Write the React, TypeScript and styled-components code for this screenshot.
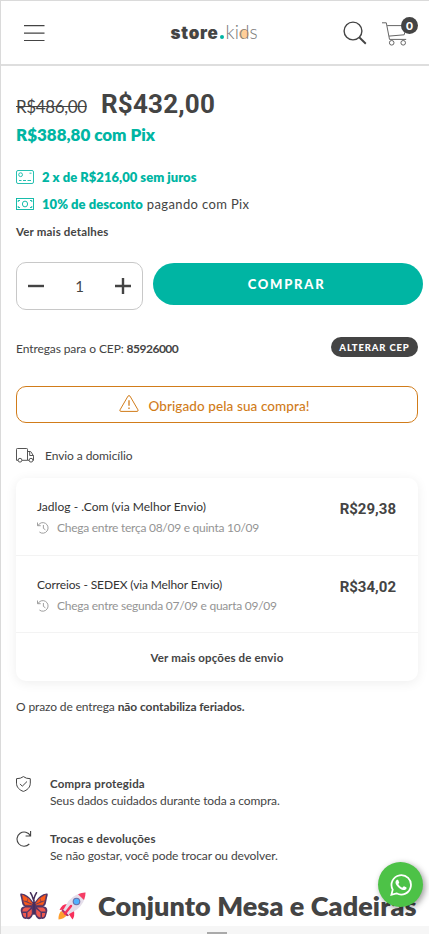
import React from "react";
import styled, { createGlobalStyle } from "styled-components";

const TEAL = "#00b5a3";
const INK = "#444444";
const ORANGE = "#d17c1a";

const GlobalStyle = createGlobalStyle`
  * { box-sizing: border-box; }
  body { margin: 0; background: #fff; color: ${INK}; font-family: Lato, "Liberation Sans", sans-serif; font-size: 12px; }
  svg { display: block; flex: none; }
`;

const Page = styled.div`
  position: relative;
  width: 429px;
  height: 934px;
  overflow: hidden;
  display: flex;
  flex-direction: column;
  border-left: 1px solid #dadada;
  border-top: 1px solid #dadada;
`;

const Header = styled.header`
  height: 65px;
  flex: none;
  display: grid;
  grid-template-columns: 1fr auto 1fr;
  align-items: center;
  padding: 0 10px 0 23px;
  border-bottom: 2px solid #dedede;
`;

const Logo = styled.div`
  display: flex;
  align-items: baseline;
  isolation: isolate;
  font-family: Inter, sans-serif;
  font-size: 18px;
  line-height: 22px;
  margin: 0 15px 0 0;
`;
const LogoBold = styled.span`
  font-weight: 900;
  font-size: 17px;
  letter-spacing: 0.7px;
`;
const LogoDot = styled.i`
  width: 4px;
  height: 4px;
  margin: 0 2px 0 1px;
  border-radius: 50%;
  background: ${TEAL};
`;
const LogoLight = styled.span`
  font-family: Lato, sans-serif;
  font-weight: 300;
  font-size: 19px;
  letter-spacing: 0;
  color: #777;
`;
const Disc = styled.span<{ $size: number; $left: number; $bottom: number }>`
  position: relative;
  &::before {
    content: "";
    position: absolute;
    z-index: -1;
    left: ${(p) => p.$left}px;
    bottom: ${(p) => p.$bottom}px;
    width: ${(p) => p.$size}px;
    height: ${(p) => p.$size}px;
    border-radius: 50%;
    background: #ffcf99;
  }
`;

const HeaderActions = styled.div`
  display: flex;
  justify-content: flex-end;
  align-items: center;
  gap: 15px;
`;
const Cart = styled.div`
  position: relative;
  width: 37px;
  height: 32px;
  padding-top: 5px;
`;
const CartCount = styled.span`
  position: absolute;
  left: 19px;
  top: 0;
  width: 17px;
  height: 17px;
  border-radius: 50%;
  background: ${INK};
  color: #fff;
  font: 900 12px/17px Lato, sans-serif;
  text-align: center;
`;

const Main = styled.main`
  display: flex;
  flex-direction: column;
  padding: 21px 11px 0 15px;
`;

const Prices = styled.div`
  display: flex;
  align-items: baseline;
  gap: 14px;
  height: 34px;
  line-height: 34px;
`;
const OldPrice = styled.s`
  font-size: 17px;
  letter-spacing: -0.38px;
  width: 71px;
`;
const Price = styled.strong`
  font-family: Roboto, sans-serif;
  font-size: 26px;
  font-weight: 700;
  letter-spacing: 0.18px;
`;
const PixPrice = styled.strong`
  height: 27px;
  line-height: 27px;
  font-size: 17px;
  font-weight: 800;
  letter-spacing: -0.02px;
  color: ${TEAL};
`;

const Benefits = styled.div`
  display: flex;
  flex-direction: column;
  margin-top: 15px;
`;
const Benefit = styled.div`
  height: 27px;
  display: flex;
  align-items: center;
  font-size: 13px;
  letter-spacing: 0.37px;
  svg { margin: 1px 8px 0 0; color: ${TEAL}; }
`;
const Strong = styled.b<{ $space?: number }>`
  letter-spacing: ${(p) => p.$space ?? 0.18}px;
`;
const TealStrong = styled(Strong)`
  color: ${TEAL};
  font-weight: 800;
  margin-right: 4px;
`;
const DetailsLink = styled.b`
  height: 29px;
  line-height: 30px;
  font-size: 11.5px;
  letter-spacing: 0.17px;
`;

const BuyRow = styled.div`
  display: flex;
  align-items: flex-start;
  gap: 10px;
  margin: 16px -6px 0 0;
  height: 48px;
`;
const Quantity = styled.div`
  width: 127px;
  height: 48px;
  display: flex;
  align-items: center;
  justify-content: space-between;
  padding: 0 11px;
  border: 1px solid #c8c8c8;
  border-radius: 10px;
  font-size: 15px;
`;
const BuyButton = styled.button`
  width: 270px;
  height: 42px;
  margin-top: 1px;
  padding: 0 3px 1px 0;
  border: 0;
  border-radius: 21px;
  background: ${TEAL};
  color: #fff;
  font: 900 13px Lato, sans-serif;
  letter-spacing: 1.75px;
`;

const CepRow = styled.div`
  display: flex;
  align-items: center;
  justify-content: space-between;
  height: 22px;
  margin-top: 26px;
`;
const CepText = styled.span`
  letter-spacing: -0.1px;
  padding-top: 3px;
`;
const CepButton = styled.button`
  width: 87px;
  height: 20px;
  padding: 0;
  border: 0;
  border-radius: 10px;
  background: ${INK};
  color: #fff;
  font: 900 9.5px Lato, sans-serif;
  letter-spacing: 0.85px;
`;

const Alert = styled.div`
  height: 37px;
  margin-top: 28px;
  display: flex;
  align-items: center;
  justify-content: center;
  gap: 9px;
  border: 1px solid ${ORANGE};
  border-radius: 10px;
  color: ${ORANGE};
  font-size: 13.5px;
  font-weight: 500;
  letter-spacing: 0.1px;
  padding-right: 5px;
  svg { margin-top: -3px; }
  span { padding-top: 3px; }
`;

const ShippingTitle = styled.div`
  height: 20px;
  margin-top: 22px;
  display: flex;
  align-items: center;
  gap: 11px;
  letter-spacing: -0.08px;
`;
const Card = styled.section`
  height: 203px;
  margin-top: 13px;
  border-radius: 10px;
  box-shadow: 0 2px 12px rgba(0, 0, 0, 0.07);
`;
const Option = styled.div`
  height: 77px;
  display: flex;
  justify-content: space-between;
  padding: 18px 22px 0 21px;
  border-bottom: 1px solid #f3f3f3;
  &:first-child { height: 78px; }
`;
const OptionName = styled.div<{ $space: number }>`
  height: 21px;
  line-height: 21px;
  color: #333;
  letter-spacing: ${(p) => p.$space}px;
`;
const OptionDate = styled.div`
  display: flex;
  align-items: center;
  gap: 8px;
  height: 21px;
  color: #949494;
  letter-spacing: -0.26px;
  white-space: nowrap;
`;
const OptionPrice = styled.b`
  font-family: Roboto, sans-serif;
  line-height: 26px;
  font-size: 15px;
`;
const MoreOptions = styled.div`
  height: 48px;
  line-height: 50px;
  text-align: center;
  font-weight: 700;
  font-size: 11.5px;
  letter-spacing: 0.16px;
`;
const Note = styled.p`
  margin: 16px 0 0;
  line-height: 20px;
  letter-spacing: -0.12px;
`;

const Assurances = styled.div`
  display: flex;
  flex-direction: column;
  gap: 21px;
  margin-top: 58px;
`;
const Assurance = styled.div`
  height: 34px;
  display: flex;
  gap: 18px;
  line-height: 17px;
  letter-spacing: -0.1px;
  svg { margin-top: 1px; }
`;
const AssuranceTitle = styled.b`
  display: block;
  font-size: 11.5px;
  letter-spacing: 0.18px;
`;
const ProductTitle = styled.h1`
  display: flex;
  align-items: center;
  gap: 10px;
  height: 40px;
  margin: 22px 0 0;
  padding-left: 4px;
  font-size: 27px;
  font-weight: 800;
  white-space: nowrap;
  span { margin: -2px 0 0 2px; letter-spacing: 0.08px; }
`;

const WhatsAppButton = styled.a`
  position: absolute;
  left: 377px;
  top: 861px;
  width: 45px;
  height: 45px;
  display: flex;
  align-items: center;
  justify-content: center;
  border-radius: 50%;
  background: #4dc247;
  box-shadow: 2px 2px 6px rgba(0, 0, 0, 0.4);
`;
const BottomBar = styled.div`
  position: absolute;
  left: 0;
  right: 0;
  bottom: 0;
  height: 8px;
  display: flex;
  justify-content: center;
  align-items: flex-end;
  background: #f6f6f6;
`;
const Handle = styled.i`
  width: 20px;
  height: 2px;
  background: #aaa;
  margin-left: 4px;
`;

const MenuIcon = () => (
  <svg width="21" height="18" viewBox="0 0 21 18" stroke={INK} strokeWidth="1.2">
    <path d="M0 1.6h20.5M0 9.1h20.5M0 16.5h20.5" />
  </svg>
);
const SearchIcon = () => (
  <svg width="24" height="24" viewBox="0 0 24 24" fill="none" stroke={INK} strokeWidth="1.4">
    <circle cx="10" cy="10" r="8.9" />
    <path d="m16.2 16.2 6.6 6.5" strokeWidth="1.9" />
  </svg>
);
const CartIcon = () => (
  <svg width="26" height="24" viewBox="0 0 26 24" fill="none" stroke="#666" strokeWidth="1">
    <path d="M0 .8h4.3l3.2 16.6h16.7M5.2 3.6h19.3l-2.3 9.2L7 14.1" />
    <circle cx="9.7" cy="20.8" r="2.3" />
    <circle cx="21.2" cy="20.8" r="2.3" />
  </svg>
);
const CardIcon = () => (
  <svg width="18" height="14" viewBox="0 0 18 14" fill="none" stroke="currentColor" strokeWidth=".85">
    <rect x=".5" y=".5" width="17" height="13" rx="1.5" />
    <circle cx="4.6" cy="4.7" r="1.9" />
    <path d="M3 10.5h2.5M7 10.5h3M11.5 10.5H15M13.5 3.2h2" />
  </svg>
);
const CashIcon = () => (
  <svg width="18" height="12" viewBox="0 0 18 12" fill="none" stroke="currentColor" strokeWidth=".9">
    <rect x=".5" y=".5" width="17" height="11" />
    <ellipse cx="9" cy="6" rx="2.6" ry="2.9" />
    <path d="M2.2 4V2.5H4M14 2.5h1.8V4M2.2 8v1.5H4M14 9.5h1.8V8" />
  </svg>
);
const MinusIcon = () => (
  <svg width="16" height="16" stroke={INK} strokeWidth="2.4"><path d="M0 8h16" /></svg>
);
const PlusIcon = () => (
  <svg width="16" height="16" stroke={INK} strokeWidth="2.4"><path d="M0 8h16M8 0v16" /></svg>
);
const WarningIcon = () => (
  <svg width="20" height="17" viewBox="0 0 20 17" fill="none" stroke={ORANGE}>
    <path d="M9 1.1Q10 0 11 1.1l8 13.8q.4 1.5-.8 1.5H1.8q-1.4 0-.8-1.5z" />
    <path d="M10 5.2v5.6M10 12.5v1.6" strokeWidth="1.3" />
  </svg>
);
const TruckIcon = () => (
  <svg width="18" height="15" viewBox="0 0 18 15" fill="none" stroke="#555">
    <path d="M2 12.3H.5V1.3q0-.8.8-.8h9.4q.8 0 .8.8v11H6M11.5 3.5h2.7q.7 0 1 .6l2.3 4v4.2H17M13 12.3h-1.5M13.7 3.5v4h3.8" />
    <circle cx="4" cy="12.2" r="1.9" />
    <circle cx="15" cy="12.2" r="1.9" />
  </svg>
);
const HistoryIcon = () => (
  <svg width="12" height="12" viewBox="0 0 12 12" fill="none" stroke="#949494" strokeWidth=".9">
    <path d="M.5.5v3.2h3.2M1 3.6A5.3 5.3 0 1 1 2.4 10M6.4 3v3.4l2 1.4" />
  </svg>
);
const ShieldIcon = () => (
  <svg width="16" height="16" viewBox="0 0 16 16" fill="none" stroke={INK}>
    <path d="M7.4.6Q10 2.700 14.300 2.700v4.500c0 4.200-3.200 7-6.900 8.200C3.700 14.200.5 11.400.5 7.200V2.700Q4.800 2.700 7.400.6z" />
    <path d="m4 7.900 2.300 2.300L11 5.500" />
  </svg>
);
const RefreshIcon = () => (
  <svg width="16" height="16" viewBox="0 0 16 16" fill="none" stroke={INK} strokeWidth="1.100">
    <path d="M14.600 0v5h-5M14.400 4.800A7.100 7.100 0 1 0 13.300 13" />
  </svg>
);
const WhatsAppIcon = () => (
  <svg width="22" height="22" viewBox="0 0 24 24" fill="#fff">
    <path d="M17.470 14.380c-.3-.15-1.760-.87-2.030-.97-.27-.1-.47-.15-.67.15-.2.3-.77.97-.94 1.160-.17.2-.35.22-.64.08-.3-.15-1.260-.47-2.400-1.480-.88-.79-1.480-1.760-1.650-2.060-.17-.3-.02-.46.13-.61.13-.13.3-.35.45-.52.15-.17.2-.3.3-.5.1-.2.050-.37-.03-.52-.08-.15-.67-1.610-.92-2.210-.24-.58-.49-.5-.67-.51l-.57-.01c-.2 0-.52.07-.79.37-.27.3-1.040 1.020-1.040 2.480s1.070 2.880 1.210 3.070c.15.2 2.100 3.200 5.080 4.490.71.3 1.260.49 1.690.62.71.23 1.360.2 1.870.12.57-.08 1.760-.72 2.010-1.410.25-.69.25-1.290.17-1.410-.07-.12-.27-.2-.57-.35z" />
    <path fill="none" stroke="#fff" strokeWidth="1.900" d="M1.500 22.600 3 17A10.600 10.600 0 1 1 7.100 21.100z" />
  </svg>
);
const Butterfly = () => (
  <svg width="28" height="28" viewBox="0 0 28 28">
    <path d="M13 10Q8 2 1.500 1.500C0 1 0 3 .8 5l1.500 7q.4 2 2.500 2.300Q0 15 .8 19.500l1.400 5q1 3 4.300 2.300 4 2 6.500-4.300h2q2.500 6.300 6.500 4.300 3.300.7 4.300-2.300l1.400-5Q28 15 23.200 14.300q2.100-.3 2.500-2.300l1.500-7c.8-2 .8-4-.7-3.500Q20 2 15 10z" fill="#533566" />
    <path d="m2.500 3 5 3-.8 3-3.300-.8zM8.500 6.500l3.800 5-4.600-2zM3.700 9.500l8 3.300H5.200zM25.500 3l-5 3 .8 3 3.300-.8zM19.500 6.500l-3.800 5 4.600-2zM24.300 9.500l-8 3.300h6.500z" fill="#ff5a19" stroke="#ff5a19" strokeWidth=".6" />
    <path d="M5 15.500h6l-4 4H2.300q0-3 2.700-4zM2.700 21H6v4.300q-2 0-2.600-1.500zM7.500 20.500l4.300-3.500v4.500q-1 3.500-4.300 4zM23 15.500h-6l4 4h4.700q0-3-2.700-4zM25.300 21H22v4.300q2 0 2.600-1.500zM20.500 20.500 16.200 17v4.500q1 3.500 4.300 4z" fill="#ef584f" />
    <path d="M10.500.7q1.500 2 3 7.300 1.500-5.300 3-7.300M14 8v14" fill="none" stroke="#452d59" strokeWidth="1.500" strokeLinecap="round" />
  </svg>
);
const Rocket = () => (
  <svg width="28" height="28" viewBox="0 0 28 28">
    <path d="M3 19q-3 4-2.500 8.500Q6 27 9 23z" fill="#ff9f2e" />
    <path d="M9 12q-5 0-7.500 6l6-.5zM16 19q1 5-1.500 8.500L10 21z" fill="#f8305b" />
    <path d="M27.500.5Q17 1 10.500 9L5 18.500l4.500 4.500L19 17.500Q27.500 10.500 27.500.5z" fill="#e5deea" />
    <path d="M27.500.5q-4 0-7.500 1.700L26 8q1.500-3.500 1.500-7.500z" fill="#f53d65" />
    <path d="m4.500 17 6.500 6.500-2 .8L3.500 19z" fill="#a83267" />
    <path d="m13 14-6 7.500" stroke="#f8305b" strokeWidth="2.500" strokeLinecap="round" />
    <circle cx="18.500" cy="9.500" r="3.800" fill="#6d6fa8" />
    <circle cx="18.500" cy="9.500" r="2.700" fill="#50b2ff" />
  </svg>
);

const shippingOptions = [
  { name: "Jadlog - .Com (via Melhor Envio)", date: "Chega entre terça 08/09 e quinta 10/09", price: "R$29,38", space: 0.03 },
  { name: "Correios - SEDEX (via Melhor Envio)", date: "Chega entre segunda 07/09 e quarta 09/09", price: "R$34,02", space: -0.12 },
];

export default function App() {
  return (
    <Page>
      <GlobalStyle />
      <Header>
        <MenuIcon />
        <Logo>
          <LogoBold>st<Disc $size={5} $left={3.5} $bottom={5}>o</Disc>re</LogoBold>
          <LogoDot />
          <LogoLight>ki<Disc $size={10} $left={0.5} $bottom={4}>d</Disc>s</LogoLight>
        </Logo>
        <HeaderActions>
          <SearchIcon />
          <Cart>
            <CartIcon />
            <CartCount>0</CartCount>
          </Cart>
        </HeaderActions>
      </Header>
      <Main>
        <Prices>
          <OldPrice>R$486,00</OldPrice>
          <Price>R$432,00</Price>
        </Prices>
        <PixPrice>R$388,80 com Pix</PixPrice>
        <Benefits>
          <Benefit>
            <CardIcon />
            <TealStrong $space={0.02}>2 x de R$216,00 sem juros</TealStrong>
          </Benefit>
          <Benefit>
            <CashIcon />
            <TealStrong $space={0.04}>10% de desconto</TealStrong>
            <span>pagando com Pix</span>
          </Benefit>
        </Benefits>
        <DetailsLink>Ver mais detalhes</DetailsLink>
        <BuyRow>
          <Quantity>
            <MinusIcon />
            <span>1</span>
            <PlusIcon />
          </Quantity>
          <BuyButton>COMPRAR</BuyButton>
        </BuyRow>
        <CepRow>
          <CepText>Entregas para o CEP: <Strong $space={-0.5}>85926000</Strong></CepText>
          <CepButton>ALTERAR CEP</CepButton>
        </CepRow>
        <Alert>
          <WarningIcon />
          <span>Obrigado pela sua compra!</span>
        </Alert>
        <ShippingTitle>
          <TruckIcon />
          <span>Envio a domicílio</span>
        </ShippingTitle>
        <Card>
          {shippingOptions.map((o) => (
            <Option key={o.name}>
              <div>
                <OptionName $space={o.space}>{o.name}</OptionName>
                <OptionDate>
                  <HistoryIcon />
                  <span>{o.date}</span>
                </OptionDate>
              </div>
              <OptionPrice>{o.price}</OptionPrice>
            </Option>
          ))}
          <MoreOptions>Ver mais opções de envio</MoreOptions>
        </Card>
        <Note>O prazo de entrega <Strong $space={-0.08}>não contabiliza feriados.</Strong></Note>
        <Assurances>
          <Assurance>
            <ShieldIcon />
            <div>
              <AssuranceTitle>Compra protegida</AssuranceTitle>
              Seus dados cuidados durante toda a compra.
            </div>
          </Assurance>
          <Assurance>
            <RefreshIcon />
            <div>
              <AssuranceTitle>Trocas e devoluções</AssuranceTitle>
              Se não gostar, você pode trocar ou devolver.
            </div>
          </Assurance>
        </Assurances>
        <ProductTitle>
          <Butterfly />
          <Rocket />
          <span>Conjunto Mesa e Cadeiras</span>
        </ProductTitle>
      </Main>
      <WhatsAppButton>
        <WhatsAppIcon />
      </WhatsAppButton>
      <BottomBar>
        <Handle />
      </BottomBar>
    </Page>
  );
}
